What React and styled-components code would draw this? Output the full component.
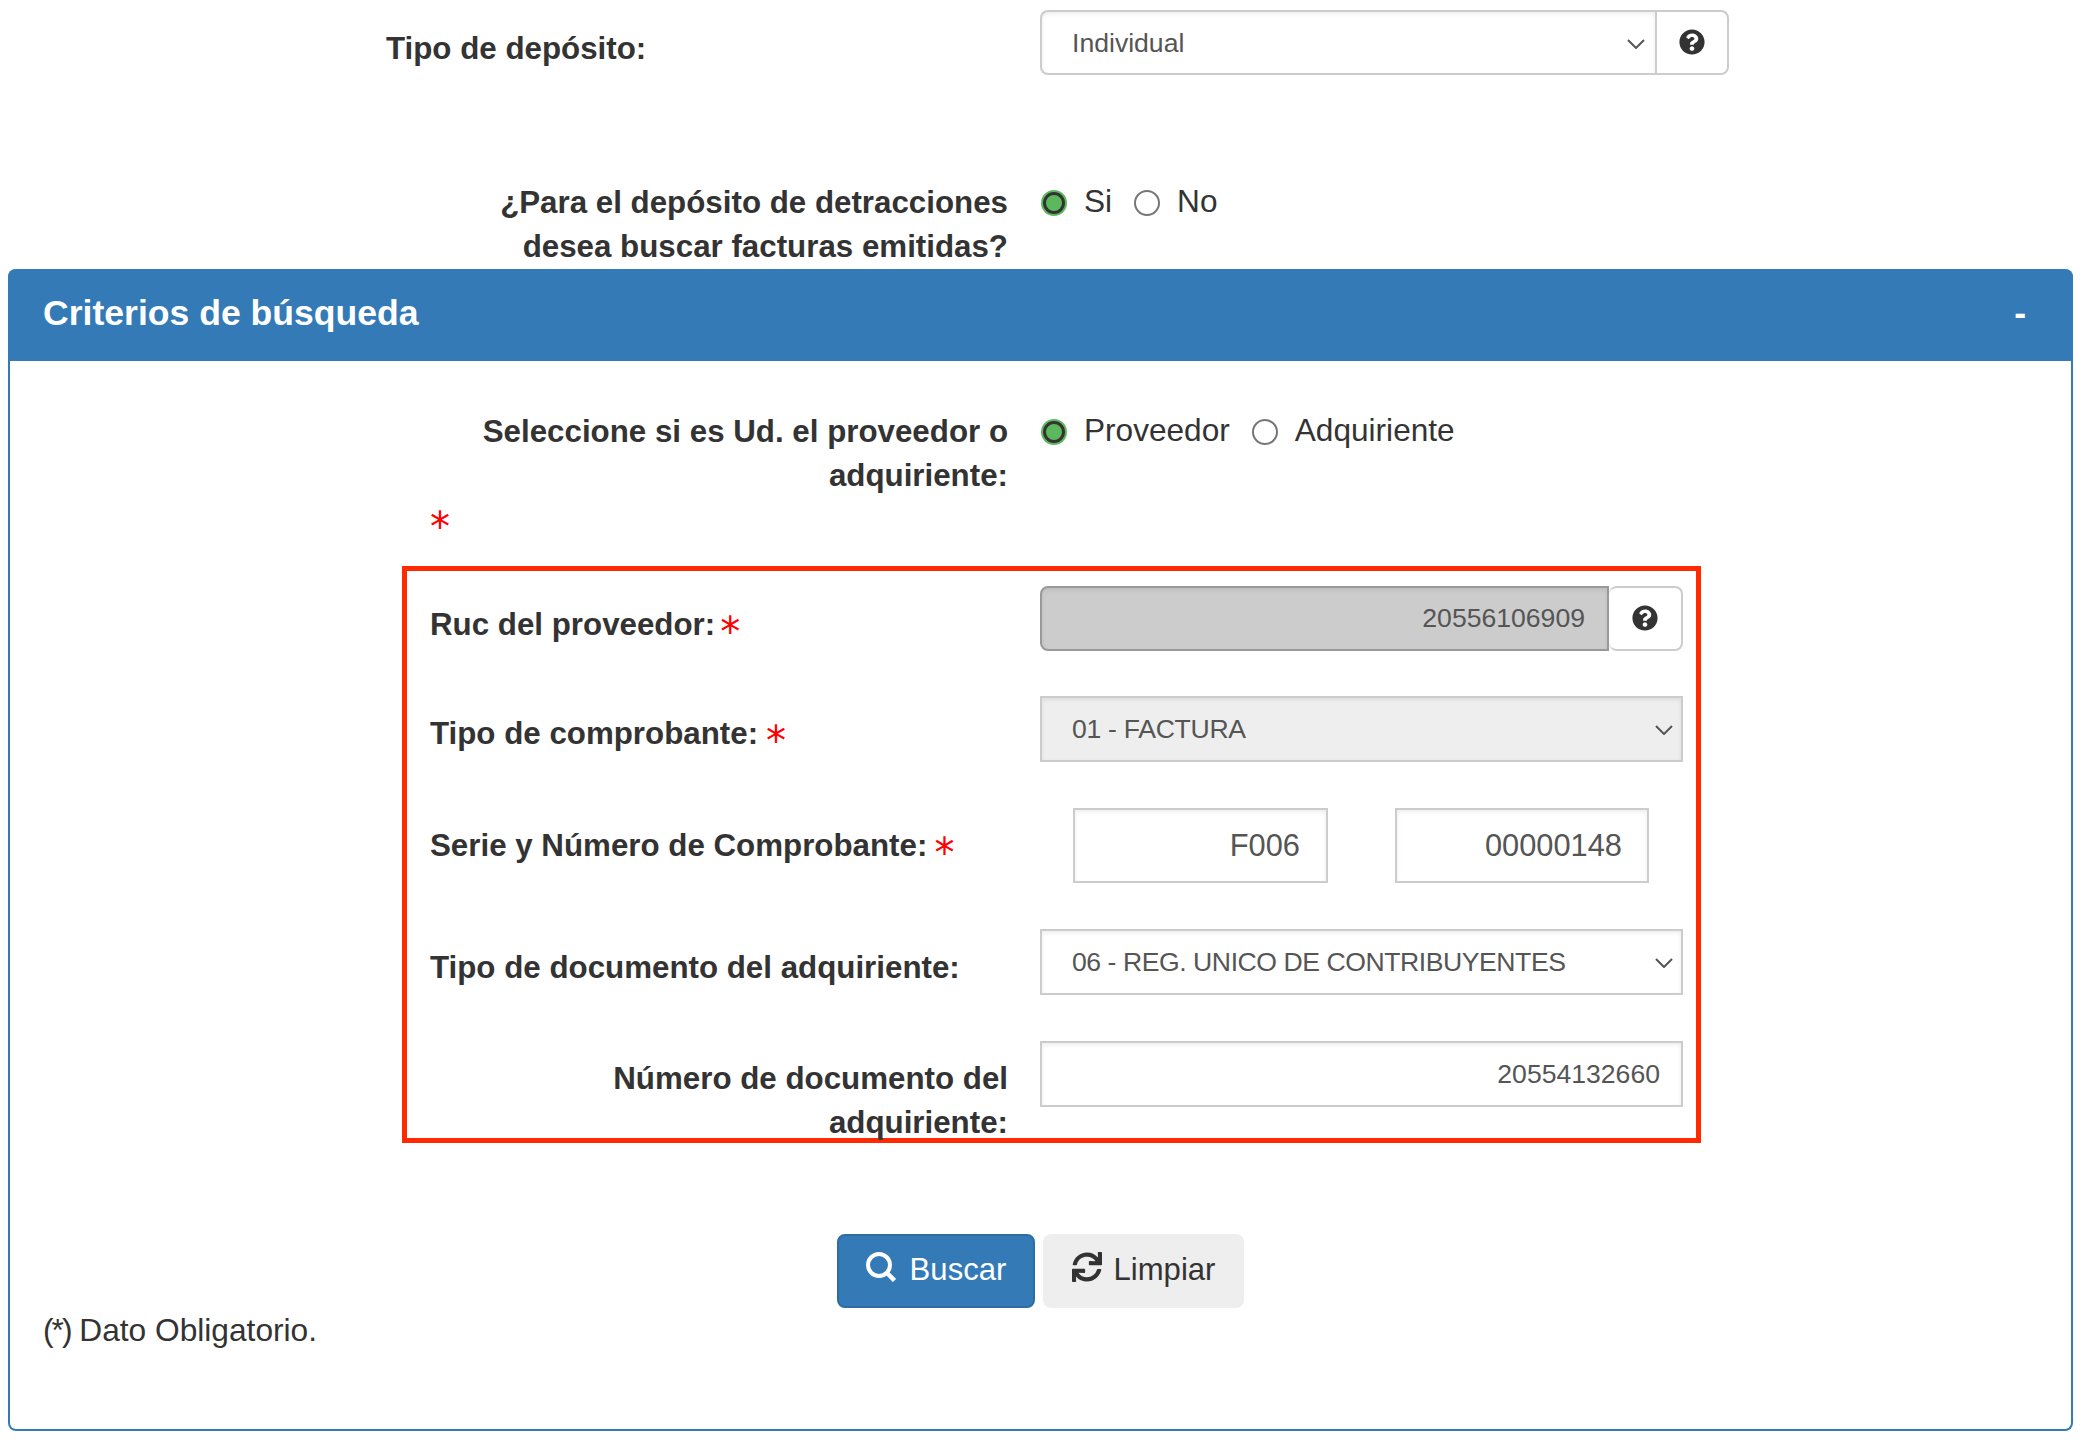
import styled, { createGlobalStyle } from "styled-components";
import { FaQuestionCircle, FaSync } from "react-icons/fa";

const GlobalStyle = createGlobalStyle`
  * {
    box-sizing: border-box;
  }
  body {
    margin: 0;
    background: #fff;
    color: #333;
    font-family: "Liberation Sans", Arial, sans-serif;
    font-size: 31.1px;
    line-height: 44px;
  }
`;

const Page = styled.div`
  width: 2086px;
  height: 1440px;
  padding: 10px 13px 0 8px;
  overflow: hidden;
`;

const TopRow = styled.div`
  display: grid;
  grid-template-columns: 1032px 1fr;
  height: ${(p) => p.$height}px;
`;

const Label = styled.label`
  display: block;
  font-size: 31.3px;
  font-weight: 700;
  padding-top: ${(p) => p.$top || 0}px;
  padding-left: ${(p) => p.$left || 0}px;
  padding-right: ${(p) => (p.$right ? 32 : 0)}px;
  text-align: ${(p) => (p.$right ? "right" : "left")};
`;

const RadioGroup = styled.div`
  display: flex;
  align-items: center;
  height: 44px;
  padding-left: 1px;
`;

const RadioInput = styled.input.attrs({ type: "radio" })`
  appearance: none;
  flex: none;
  width: ${(p) => (p.checked ? 22 : 26)}px;
  height: ${(p) => (p.checked ? 22 : 26)}px;
  margin: ${(p) => (p.checked ? "0 2px" : 0)};
  border-radius: 50%;
  border: ${(p) => (p.checked ? "3px solid #333" : "2px solid #767676")};
  background: ${(p) => (p.checked ? "#5cb85c" : "#fff")};
  box-shadow: ${(p) => (p.checked ? "0 0 0 2px #5cb85c" : "none")};
`;

const RadioText = styled.span`
  margin: 0 22px 0 17px;
  padding-bottom: 4px;
  font-size: 31.6px;
`;

const InputGroup = styled.div`
  display: flex;
`;

const SelectWrap = styled.div`
  position: relative;
  width: ${(p) => p.$width}px;
  height: ${(p) => p.$height}px;
`;

const Select = styled.select`
  appearance: none;
  display: block;
  width: 100%;
  height: 100%;
  padding: 0 40px 0 30px;
  border: 2px solid #ccc;
  border-right-width: ${(p) => (p.$round ? 0 : 2)}px;
  border-radius: ${(p) => (p.$round ? "8px 0 0 8px" : 0)};
  background: ${(p) => (p.disabled ? "#eee" : "#fff")};
  box-shadow: inset 0 2px 4px rgba(0, 0, 0, 0.075);
  color: #555;
  opacity: 1;
  letter-spacing: ${(p) => p.$spacing || 0}px;
  font: 26.6px "Liberation Sans", Arial, sans-serif;
`;

const Chevron = styled.svg`
  position: absolute;
  top: 50%;
  right: 10px;
  width: 18px;
  height: 10px;
  margin-top: -4px;
  fill: none;
  stroke: #555;
  stroke-width: 2;
  pointer-events: none;
`;

const HelpAddon = styled.div`
  display: flex;
  align-items: center;
  justify-content: center;
  width: ${(p) => p.$width}px;
  height: 65px;
  padding-bottom: 2px;
  background: #fff;
  border: 2px solid #ccc;
  border-left-width: ${(p) => (p.$joined ? 2 : 0)}px;
  border-radius: ${(p) => (p.$joined ? "0 8px 8px 0" : "8px")};
  font-size: 26px;
  color: #333;
`;

const TextInput = styled.input`
  display: block;
  width: ${(p) => p.$width}px;
  height: ${(p) => p.$height}px;
  padding: 0 ${(p) => p.$pad}px 0 12px;
  border: 2px solid ${(p) => (p.disabled ? "#999" : "#ccc")};
  border-radius: ${(p) => (p.disabled ? "8px 0 0 8px" : 0)};
  background: ${(p) => (p.disabled ? "#ccc" : "#fff")};
  box-shadow: inset 0 2px 4px rgba(0, 0, 0, 0.075);
  color: #555;
  opacity: 1;
  text-align: right;
  font: ${(p) => p.$size}px "Liberation Sans", Arial, sans-serif;
`;

const Panel = styled.section`
  width: 2065px;
  height: 1162px;
  border: 2px solid #337ab7;
  border-top: 0;
  border-radius: 8px;
`;

const PanelHeader = styled.header`
  display: flex;
  align-items: center;
  justify-content: space-between;
  height: 92px;
  margin: 0 -2px;
  padding: 0 47px 5px 35px;
  background: #337ab7;
  border-radius: 8px 8px 0 0;
  color: #fff;
  font-size: 35.6px;
  font-weight: 700;
`;

const PanelBody = styled.div`
  padding-top: 49px;
`;

const RadioRow = styled.div`
  display: grid;
  grid-template-columns: 1030px 1fr;
  height: 88px;
`;

const LooseStarRow = styled.div`
  height: 68px;
  padding-left: 420px;
`;

const Star = styled.span`
  display: inline-block;
  margin-left: ${(p) => p.$gap || 0}px;
  color: #f00;
  font-family: "DejaVu Sans", sans-serif;
  font-weight: 400;
  font-size: 40px;
  line-height: 44px;
  vertical-align: -11px;
`;

const RedBox = styled.div`
  width: 1299px;
  height: 577px;
  margin-left: 392px;
  padding: 15px 13px 0 23px;
  border: 5px solid #ff2a00;
`;

const BoxRow = styled.div`
  display: grid;
  grid-template-columns: 610px 643px;
  height: ${(p) => p.$height}px;
`;

const SerieInputs = styled.div`
  display: flex;
  gap: 67px;
  padding-left: 33px;
`;

const Actions = styled.div`
  display: flex;
  justify-content: center;
  gap: 8px;
  margin-top: 91px;
`;

const Button = styled.button`
  display: flex;
  align-items: center;
  justify-content: center;
  gap: ${(p) => p.$gap}px;
  width: ${(p) => p.$width}px;
  height: 74px;
  padding: 0 0 2px;
  border: 2px solid ${(p) => (p.$primary ? "#2e6da4" : "#eee")};
  border-radius: 8px;
  background: ${(p) => (p.$primary ? "#337ab7" : "#eee")};
  color: ${(p) => (p.$primary ? "#fff" : "#333")};
  font: 31.1px "Liberation Sans", Arial, sans-serif;

  svg {
    margin-bottom: 6px;
  }
`;

const Note = styled.p`
  margin: 0;
  padding-left: 33px;
  font-size: 31.7px;
`;

const NoteMark = styled.span`
  letter-spacing: -2px;
`;

const SearchIcon = () => (
  <svg width="30" height="30" viewBox="0 0 30 30" fill="none" stroke="#fff">
    <circle cx="13" cy="13" r="11" strokeWidth="4" />
    <line x1="21" y1="21" x2="28.5" y2="28.5" strokeWidth="4.5" />
  </svg>
);

const ChevronIcon = () => (
  <Chevron viewBox="0 0 18 10">
    <polyline points="1,1 9,9 17,1" />
  </Chevron>
);

const Radio = ({ checked, children, name }) => (
  <>
    <RadioInput name={name} checked={checked} readOnly />
    <RadioText>{children}</RadioText>
  </>
);

const SelectField = ({ value, width, height, round, disabled, spacing }) => (
  <SelectWrap $width={width} $height={height}>
    <Select value={value} $round={round} $spacing={spacing} disabled={disabled} onChange={() => {}}>
      <option value={value}>{value}</option>
    </Select>
    <ChevronIcon />
  </SelectWrap>
);

function App() {
  return (
    <Page>
      <GlobalStyle />
      <TopRow $height={171}>
        <Label $left={378} $top={17}>Tipo de depósito:</Label>
        <InputGroup>
          <SelectField value="Individual" width={615} height={65} round />
          <HelpAddon $width={74} $joined>
            <FaQuestionCircle />
          </HelpAddon>
        </InputGroup>
      </TopRow>
      <TopRow $height={88}>
        <Label $right>
          ¿Para el depósito de detracciones
          <br />
          desea buscar facturas emitidas?
        </Label>
        <RadioGroup>
          <Radio name="facturas" checked>Si</Radio>
          <Radio name="facturas" checked={false}>No</Radio>
        </RadioGroup>
      </TopRow>
      <Panel>
        <PanelHeader>
          <span>Criterios de búsqueda</span>
          <span>-</span>
        </PanelHeader>
        <PanelBody>
          <RadioRow>
            <Label $right>
              Seleccione si es Ud. el proveedor o
              <br />
              adquiriente:
            </Label>
            <RadioGroup>
              <Radio name="rol" checked>Proveedor</Radio>
              <Radio name="rol" checked={false}>Adquiriente</Radio>
            </RadioGroup>
          </RadioRow>
          <LooseStarRow>
            <Star>*</Star>
          </LooseStarRow>
          <RedBox>
            <BoxRow $height={110}>
              <Label $top={17}>Ruc del proveedor:<Star $gap={5}>*</Star></Label>
              <InputGroup>
                <TextInput disabled value="20556106909" readOnly $width={569} $height={65} $pad={22} $size={26.6} />
                <HelpAddon $width={74}>
                  <FaQuestionCircle />
                </HelpAddon>
              </InputGroup>
            </BoxRow>
            <BoxRow $height={112}>
              <Label $top={16}>Tipo de comprobante:<Star $gap={8}>*</Star></Label>
              <SelectField value="01 - FACTURA" width={643} height={66} disabled spacing={-0.3} />
            </BoxRow>
            <BoxRow $height={121}>
              <Label $top={16}>Serie y Número de Comprobante:<Star $gap={7}>*</Star></Label>
              <SerieInputs>
                <TextInput value="F006" readOnly $width={255} $height={75} $pad={26} $size={30.8} />
                <TextInput value="00000148" readOnly $width={254} $height={75} $pad={25} $size={30.8} />
              </SerieInputs>
            </BoxRow>
            <BoxRow $height={112}>
              <Label $top={17}>Tipo de documento del adquiriente:</Label>
              <SelectField value="06 - REG. UNICO DE CONTRIBUYENTES" width={643} height={66} spacing={-0.45} />
            </BoxRow>
            <BoxRow $height={97}>
              <Label $right $top={16}>
                Número de documento del
                <br />
                adquiriente:
              </Label>
              <TextInput value="20554132660" readOnly $width={643} $height={66} $pad={21} $size={26.6} />
            </BoxRow>
          </RedBox>
          <Actions>
            <Button $primary $width={198} $gap={14}>
              <SearchIcon />
              Buscar
            </Button>
            <Button $width={201} $gap={12}>
              <FaSync size={30} />
              Limpiar
            </Button>
          </Actions>
          <Note><NoteMark>(*)</NoteMark> Dato Obligatorio.</Note>
        </PanelBody>
      </Panel>
    </Page>
  );
}

export default App;
